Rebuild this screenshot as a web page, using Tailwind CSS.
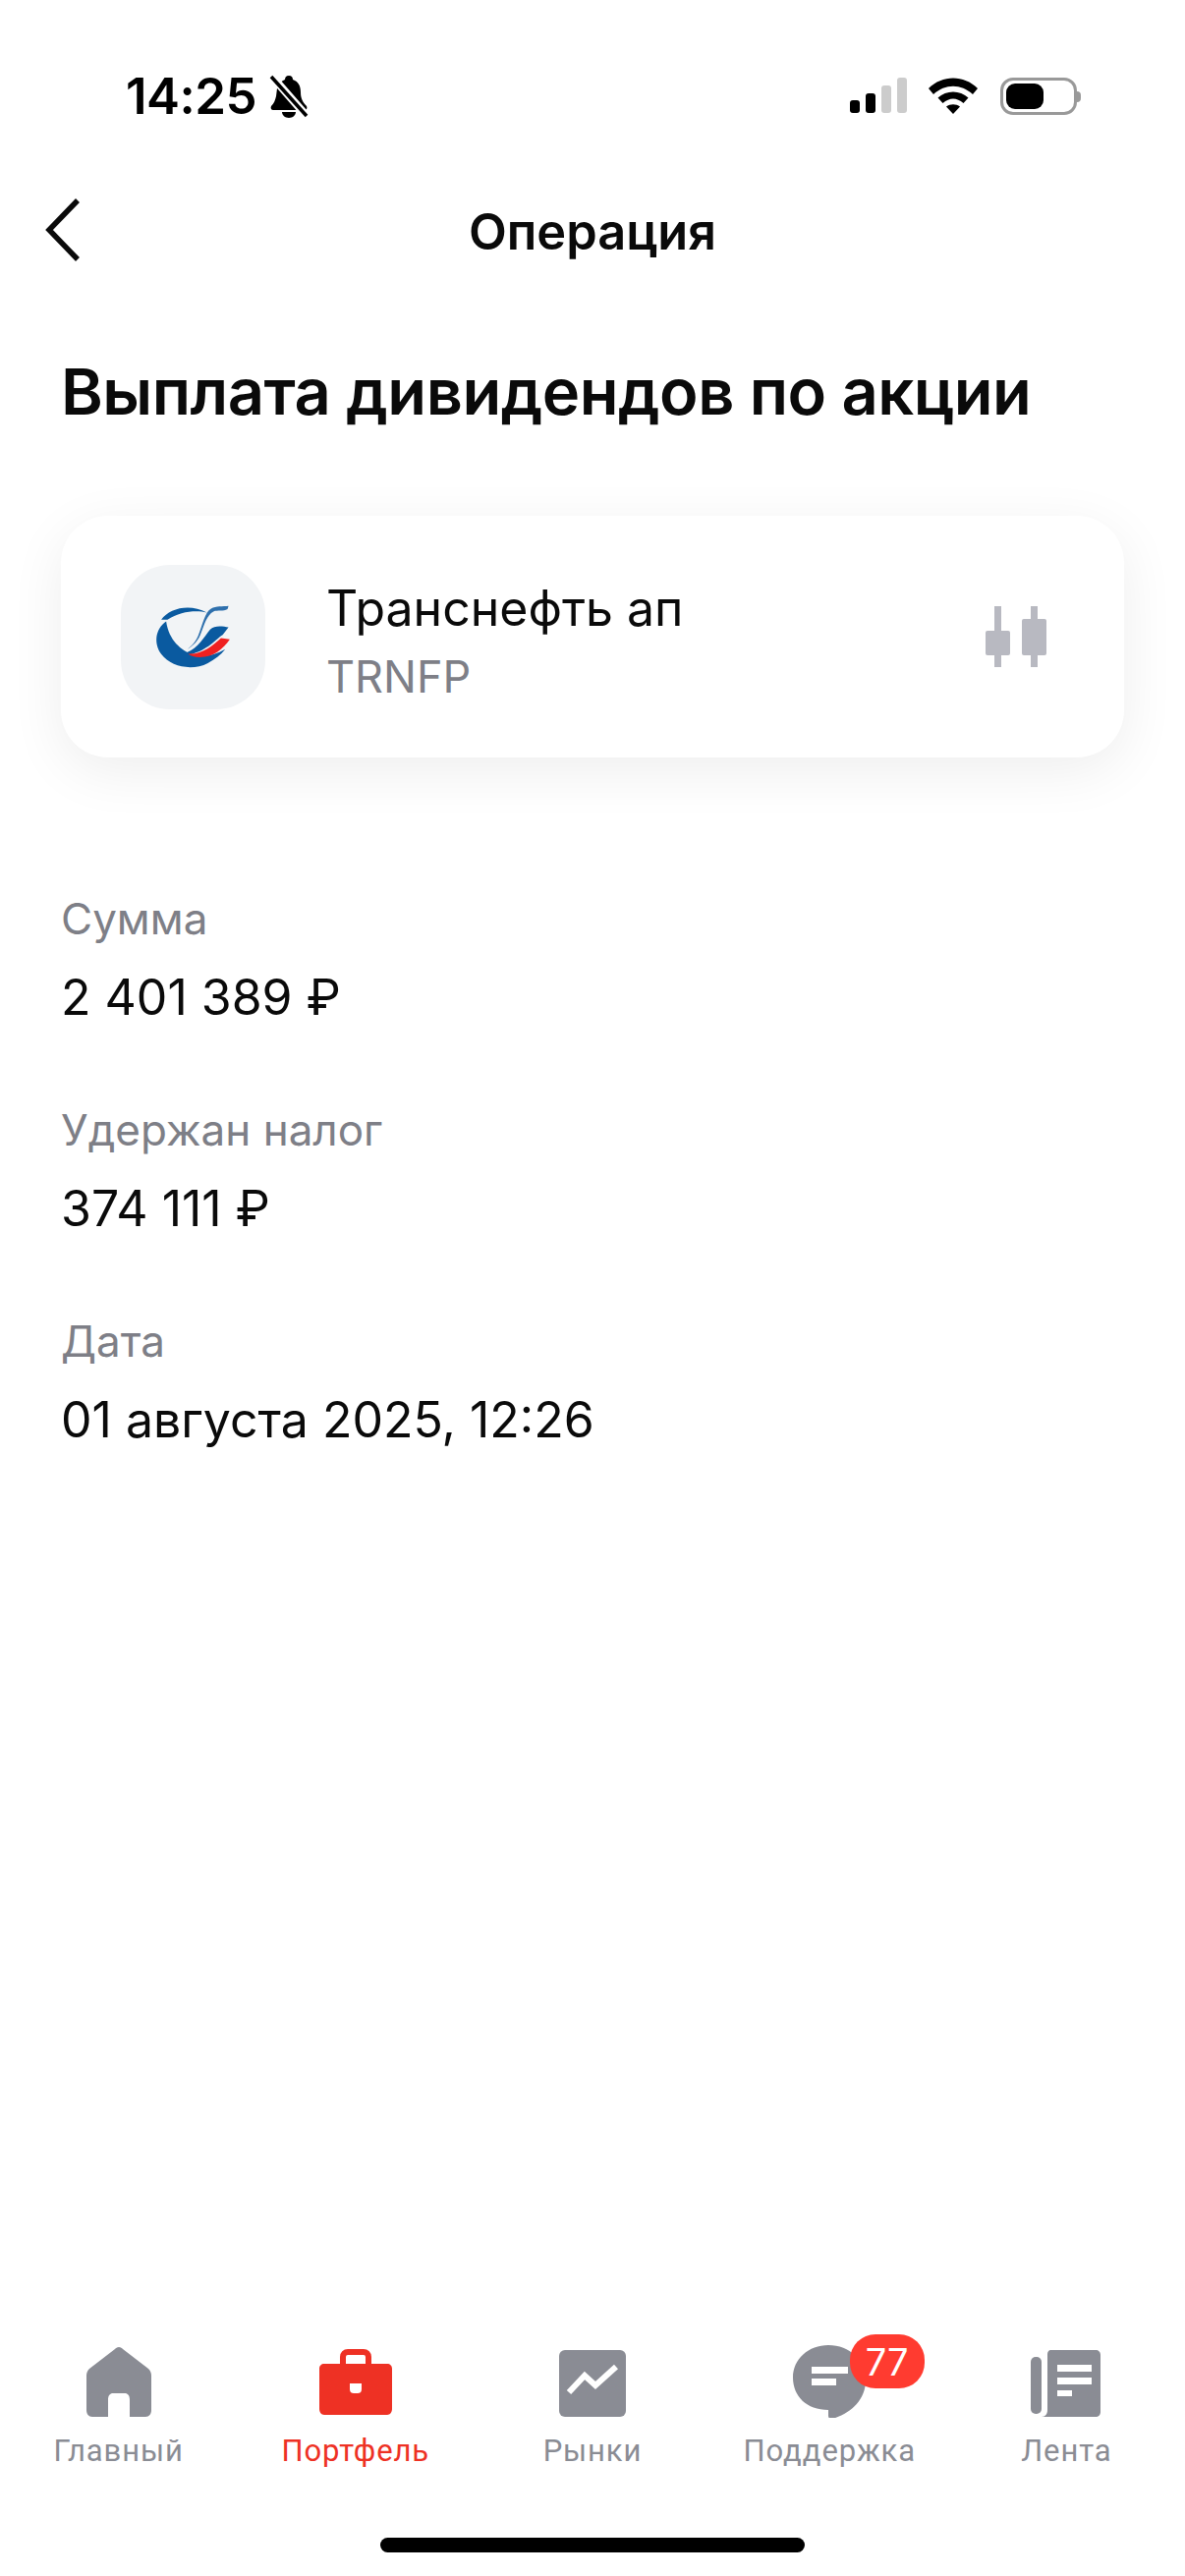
<!DOCTYPE html>
<html lang="ru">
<head>
  <meta charset="UTF-8" />
  <meta name="viewport" content="width=device-width, initial-scale=1.0"/>
  <title>Операция</title>
  <script src="https://cdn.jsdelivr.net/npm/@tailwindcss/browser@4"></script>
</head>
<body class="bg-white text-black font-['Inter',sans-serif]">
  <div class="w-[1206px] h-[2622px] flex flex-col overflow-hidden bg-white">

    <!-- Status bar -->
    <div class="h-[196px] pt-[68px] pl-[128px] pr-[106px] flex items-start justify-between shrink-0">
      <div class="flex items-center gap-[13px] h-[60px]">
        <span class="text-[51px] leading-[60px] font-semibold tracking-[-0.5px]">14:25</span>
        <svg class="w-[40px] h-[44px]" viewBox="0 0 40 44">
          <path d="M20 1c3 0 4 2 4 4 6 2 8 7 8 13 0 6 2 10 6 14 1 2 0 4-2 4H4c-2 0-3-2-2-4 3-3 4-6 5-10l1-8c1-5 4-7 8-9 0-2 1-4 4-4z" fill="#000"/>
          <path d="M13 38h14c0 3-3 6-7 6s-7-3-7-6z" fill="#000"/>
          <path d="M3 2 L38 42" stroke="#fff" stroke-width="8"/>
          <path d="M2 2 L38 42" stroke="#000" stroke-width="3.5"/>
        </svg>
      </div>
      <div class="flex items-start pt-[11px]">
        <div class="flex items-end gap-[6px] h-[36px]">
          <div class="w-[10px] h-[13px] rounded-[3px] bg-black"></div>
          <div class="w-[10px] h-[20px] rounded-[3px] bg-black"></div>
          <div class="w-[10px] h-[28px] rounded-[3px] bg-[#cccccc]"></div>
          <div class="w-[10px] h-[36px] rounded-[3px] bg-[#cccccc]"></div>
        </div>
        <svg class="w-[50px] h-[37px] ml-[22px]" viewBox="0 0 50 37">
          <path d="M0 11 C14 -3 36 -3 50 11 L45 17 C33 6 17 6 5 17 Z" fill="#000"/>
          <path d="M9.500 20.500 C18 12.500 32 12.500 40.500 20.500 L35.500 26 C28.500 20 21.500 20 14.500 26 Z" fill="#000"/>
          <path d="M18 29.500 C22 26.500 28 26.500 32 29.500 L25 37 Z" fill="#000"/>
        </svg>
        <div class="ml-[23px] w-[78px] h-[38px] rounded-[13px] border-[3px] border-[#999999] p-[3px] flex items-stretch">
          <div class="w-[38px] rounded-[9px] bg-black"></div>
        </div>
        <div class="w-[4px] h-[11px] mt-[14px] rounded-r-[4px] bg-[#999999]"></div>
      </div>
    </div>

    <!-- Header -->
    <div class="relative h-[80px] flex items-center justify-center shrink-0">
      <svg class="absolute left-[45px] top-[6px] w-[38px] h-[64px]" viewBox="0 0 38 64" fill="none">
        <path d="M34 2 L5 32 L34 62" stroke="#0a0a0a" stroke-width="5.500"/>
      </svg>
      <h2 class="text-[50.500px] font-semibold leading-[56px] text-[#0a0a0a]">Операция</h2>
    </div>

    <!-- Page title -->
    <h1 class="pl-[62px] mt-[83px] text-[65px] leading-[80px] font-semibold text-[#0a0a0a] tracking-[-0.5px] shrink-0">Выплата дивидендов по акции</h1>

    <!-- Instrument card -->
    <div class="mx-[62px] mt-[86px] h-[246px] rounded-[48px] bg-white shadow-[0_14px_56px_rgba(0,0,0,0.07)] flex items-center pl-[61px] shrink-0">
      <div class="w-[147px] h-[147px] rounded-[50px] bg-[#f2f4f6] shrink-0">
        <svg class="w-full h-full" viewBox="40 45 440 440">
          <path d="M178 217 C144 240 140 285 163 317 C193 358 260 368 305 344 C325 334 345 320 358 302 C325 322 285 328 258 318 C225 306 186 275 178 217 Z" fill="#0a5aa0"/>
          <path d="M163 212 C188 176 250 162 302 190 C270 182 220 186 182 212 Z" fill="#0a5aa0"/>
          <path d="M368 170 C350 172 330 170 315 178 C295 190 290 225 275 262 C265 285 248 300 232 308 C252 298 272 282 282 258 C295 225 302 198 322 187 C335 182 352 188 365 180 Z" fill="#2f70ad"/>
          <path d="M240 312 C275 300 295 262 312 242 C325 228 350 232 368 235 L350 258 C330 270 305 305 250 318 Z" fill="#0a5aa0"/>
          <path d="M245 316 C290 318 320 290 345 268 L372 272 C350 302 325 326 280 326 C265 326 252 323 245 316 Z" fill="#ef2020"/>
        </svg>
      </div>
      <div class="ml-[62px] pt-[7px] flex-1 flex flex-col">
        <div class="text-[50px] leading-[60px] text-[#0a0a0a]">Транснефть ап</div>
        <div class="text-[45px] leading-[50px] mt-[15px] text-[#7e7f87]">TRNFP</div>
      </div>
      <svg class="w-[62px] h-[62px] mr-[79px] shrink-0" viewBox="0 0 62 62" fill="#b8b9c1">
        <rect x="9" y="0" width="7" height="62" />
        <rect x="0" y="25" width="25" height="25" rx="2" />
        <rect x="46" y="0" width="7" height="62" />
        <rect x="37" y="13" width="25" height="37" rx="2" />
      </svg>
    </div>

    <!-- Details -->
    <div class="pl-[62px] mt-[138px] flex flex-col gap-[79px] shrink-0">
      <div>
        <div class="text-[44px] leading-[52px] text-[#7e7f87]">Сумма</div>
        <div class="text-[50px] leading-[60px] mt-[24px] text-[#0a0a0a]">2 401 389 ₽</div>
      </div>
      <div>
        <div class="text-[44px] leading-[52px] text-[#7e7f87]">Удержан налог</div>
        <div class="text-[50px] leading-[60px] mt-[24px] text-[#0a0a0a]">374 111 ₽</div>
      </div>
      <div>
        <div class="text-[44px] leading-[52px] text-[#7e7f87]">Дата</div>
        <div class="text-[50px] leading-[60px] mt-[24px] text-[#0a0a0a]">01 августа 2025, 12:26</div>
      </div>
    </div>

    <div class="flex-1"></div>

    <!-- Bottom nav -->
    <nav class="grid grid-cols-5 h-[173px] shrink-0 font-['Roboto',sans-serif] text-[31px] leading-[36px] font-[450] tracking-[0.9px] text-[#8a8c94]">
      <div class="flex flex-col items-center">
        <svg class="w-[76px] h-[76px]" viewBox="0 0 76 76">
          <path d="M38 4 C40 4 41 5 42 6 L68 26 C70 28 71 30 71 33 L71 68 C71 72 69 75 65 75 L49 75 L49 58 C49 53 47 51 44 51 L32 51 C29 51 27 53 27 58 L27 75 L11 75 C7 75 5 72 5 68 L5 33 C5 30 6 28 8 26 L34 6 C35 5 36 4 38 4 Z" fill="#8a8c94"/>
        </svg>
        <span class="mt-[16px]">Главный</span>
      </div>
      <div class="flex flex-col items-center text-[#ee3124]">
        <svg class="w-[76px] h-[76px]" viewBox="0 0 76 76">
          <path d="M6 21 H70 C73 21 75 23 75 26 V67 C75 70 73 73 70 73 H6 C3 73 1 70 1 67 V26 C1 23 3 21 6 21 Z M32 41 V47 C32 50 34 51 36 51 H40 C42 51 44 50 44 47 V41 Z" fill="#ee3124" fill-rule="evenodd"/>
          <path d="M25 23 V14 C25 11 27 9 30 9 H46 C49 9 51 11 51 14 V23" fill="none" stroke="#ee3124" stroke-width="6"/>
        </svg>
        <span class="mt-[16px]">Портфель</span>
      </div>
      <div class="flex flex-col items-center">
        <svg class="w-[76px] h-[76px]" viewBox="0 0 76 76">
          <rect x="4" y="7" width="68" height="68" rx="6" fill="#8a8c94"/>
          <path d="M14 50 L30 33 L41 43 L62 24" fill="none" stroke="#fff" stroke-width="6"/>
        </svg>
        <span class="mt-[16px]">Рынки</span>
      </div>
      <div class="relative flex flex-col items-center">
        <svg class="w-[76px] h-[76px]" viewBox="0 0 76 76">
          <path d="M37 2 C59 2 75 18 75 38 C75 58 59 72 41 77 C39 78 37 76 37 74 L37 68 C15 68 1 54 1 35 C1 16 17 2 37 2 Z" fill="#8a8c94"/>
          <rect x="20" y="24" width="37" height="7" fill="#fff"/>
          <rect x="20" y="36" width="25" height="7" fill="#fff"/>
        </svg>
        <span class="mt-[16px]">Поддержка</span>
        <!-- badge -->
        <div class="absolute left-[141px] top-[-9px] w-[76px] h-[55px] rounded-[26px] bg-[#ff3b30] flex items-center justify-center text-white text-[38px] leading-none font-normal font-['Inter',sans-serif] tracking-normal">77</div>
      </div>
      <div class="flex flex-col items-center">
        <svg class="w-[76px] h-[76px]" viewBox="0 0 76 76">
          <rect x="2" y="14" width="11" height="58" rx="5" fill="#8a8c94"/>
          <path d="M23 7 H68 C71 7 73 9 73 12 V70 C73 73 71 75 68 75 H13 C17 75 19 72 19 68 V12 C19 9 20 7 23 7 Z" fill="#8a8c94"/>
          <rect x="29" y="22" width="35" height="7" fill="#fff"/>
          <rect x="29" y="35" width="35" height="7" fill="#fff"/>
          <rect x="29" y="48" width="15" height="6" fill="#fff"/>
        </svg>
        <span class="mt-[16px]">Лента</span>
      </div>
    </nav>

    <!-- Home indicator -->
    <div class="h-[64px] flex justify-center pt-[25px] shrink-0">
      <div class="w-[432px] h-[15px] rounded-full bg-black"></div>
    </div>
  </div>
</body>
</html>
